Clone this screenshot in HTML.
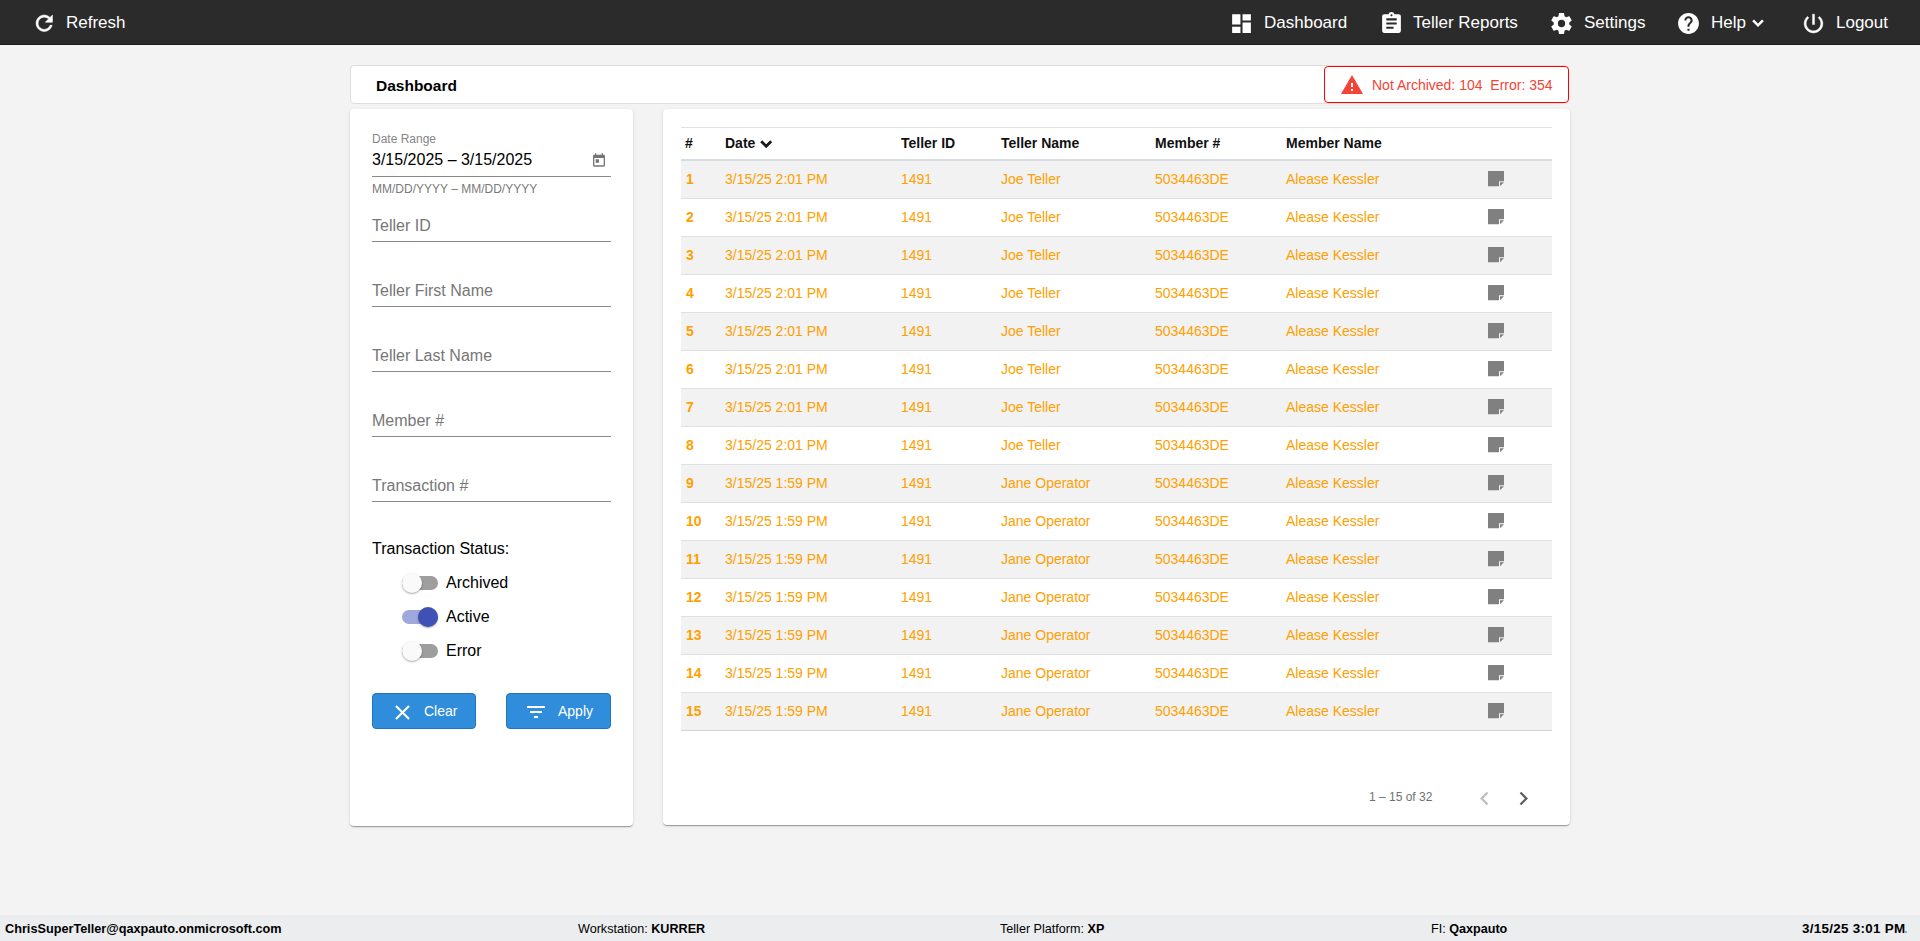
<!DOCTYPE html><html><head><meta charset="utf-8"><style>
*{margin:0;padding:0;box-sizing:border-box}
html,body{width:1920px;height:941px;overflow:hidden;background:#f3f3f3;font-family:"Liberation Sans",sans-serif}
.t{position:absolute;white-space:nowrap}
#hdr{position:absolute;left:0;top:0;width:1920px;height:45px;background:#2b2b2b;border-bottom:1px solid #1e1e1e}
.card{position:absolute;background:#fff;border-radius:4px;box-shadow:0 2px 1px -1px rgba(0,0,0,.2),0 1px 1px 0 rgba(0,0,0,.14),0 1px 3px 0 rgba(0,0,0,.12)}
.ul{position:absolute;left:372px;width:239px;height:1px;background:#8a8a8a}
.track{position:absolute;left:402px;width:36px;height:14px;border-radius:7px}
.knob{position:absolute;width:20px;height:20px;border-radius:50%;box-shadow:0 1px 2px rgba(0,0,0,.35)}
.btn{position:absolute;height:36px;background:#308ddb;border:1px solid #2274bd;border-radius:4px}
#ftr{position:absolute;left:0;top:915px;width:1920px;height:26px;background:#ecedef}
</style></head><body><div id="hdr"></div>
<svg style="position:absolute;left:31.7px;top:10.7px;width:24.5px;height:24.5px;" viewBox="0 0 24 24" fill="#fff" stroke="#fff" stroke-width="0.55"><path d="M17.65 6.35C16.2 4.9 14.21 4 12 4c-4.42 0-7.99 3.58-7.99 8s3.57 8 7.99 8c3.73 0 6.84-2.55 7.730-6h-2.08c-.82 2.33-3.04 4-5.65 4-3.31 0-6-2.69-6-6s2.69-6 6-6c1.66 0 3.14.69 4.22 1.78L13 11h7V4l-2.35 2.35z"/></svg>
<div class="t" style="left:66px;top:13px;font-size:17px;line-height:20px;color:#fff;font-weight:normal;">Refresh</div>
<svg style="position:absolute;left:1229px;top:11px;width:25px;height:25px;" viewBox="0 0 24 24" fill="#fff"><path d="M3 13h8V3H3v10zm0 8h8v-6H3v6zm10 0h8V11h-8v10zm0-18v6h8V3h-8z"/></svg>
<div class="t" style="left:1264px;top:13px;font-size:17px;line-height:20px;color:#fff;font-weight:normal;">Dashboard</div>
<svg style="position:absolute;left:1379px;top:11px;width:25px;height:25px;" viewBox="0 0 24 24" fill="#fff"><path d="M19 3h-4.18C14.4 1.84 13.3 1 12 1c-1.3 0-2.4.84-2.82 2H5c-1.1 0-2 .9-2 2v14c0 1.1.9 2 2 2h14c1.1 0 2-.9 2-2V5c0-1.1-.9-2-2-2zm-7 0c.55 0 1 .45 1 1s-.45 1-1 1-1-.45-1-1 .45-1 1-1zm2 14H7v-2h7v2zm3-4H7v-2h10v2zm0-4H7V7h10v2z"/></svg>
<div class="t" style="left:1413px;top:13px;font-size:17px;line-height:20px;color:#fff;font-weight:normal;">Teller Reports</div>
<svg style="position:absolute;left:1549px;top:11px;width:25px;height:25px;" viewBox="0 0 24 24" fill="#fff"><path d="M12,15.5A3.5,3.5 0 0,1 8.5,12A3.5,3.5 0 0,1 12,8.5A3.5,3.5 0 0,1 15.5,12A3.5,3.5 0 0,1 12,15.5M19.43,12.97C19.47,12.65 19.5,12.33 19.5,12C19.5,11.67 19.47,11.34 19.43,11L21.54,9.37C21.73,9.22 21.78,8.95 21.66,8.73L19.66,5.27C19.54,5.05 19.27,4.96 19.05,5.05L16.56,6.05C16.04,5.66 15.5,5.32 14.87,5.07L14.5,2.42C14.46,2.18 14.25,2 14,2H10C9.75,2 9.54,2.18 9.5,2.42L9.13,5.07C8.5,5.32 7.96,5.66 7.44,6.05L4.95,5.05C4.73,4.96 4.46,5.05 4.34,5.27L2.34,8.73C2.21,8.95 2.27,9.22 2.46,9.37L4.57,11C4.53,11.34 4.5,11.67 4.5,12C4.5,12.33 4.53,12.65 4.57,12.97L2.46,14.63C2.27,14.78 2.21,15.05 2.34,15.27L4.34,18.73C4.46,18.95 4.73,19.03 4.95,18.95L7.44,17.94C7.96,18.34 8.5,18.68 9.13,18.93L9.5,21.58C9.54,21.82 9.75,22 10,22H14C14.25,22 14.46,21.82 14.5,21.58L14.87,18.93C15.5,18.67 16.04,18.34 16.56,17.94L19.05,18.95C19.27,19.03 19.54,18.95 19.66,18.73L21.66,15.27C21.78,15.05 21.73,14.78 21.54,14.63L19.43,12.97Z"/></svg>
<div class="t" style="left:1584px;top:13px;font-size:17px;line-height:20px;color:#fff;font-weight:normal;">Settings</div>
<svg style="position:absolute;left:1676px;top:11px;width:25px;height:25px;" viewBox="0 0 24 24" fill="#fff"><path d="M12 2C6.48 2 2 6.48 2 12s4.48 10 10 10 10-4.48 10-10S17.52 2 12 2zm1 17h-2v-2h2v2zm2.07-7.75l-.9.92C13.45 12.9 13 13.5 13 15h-2v-.5c0-1.1.45-2.1 1.17-2.830l1.24-1.26c.37-.36.59-.86.59-1.41 0-1.1-.9-2-2-2s-2 .9-2 2H8c0-2.21 1.790-4 4-4s4 1.79 4 4c0 .88-.36 1.68-.93 2.25z"/></svg>
<div class="t" style="left:1711px;top:13px;font-size:17px;line-height:20px;color:#fff;font-weight:normal;">Help</div>
<svg style="position:absolute;left:1801px;top:11px;width:25px;height:25px;" viewBox="0 0 24 24" fill="#fff" stroke="#fff" stroke-width="0.4"><path d="M13 3h-2v10h2V3zm4.83 2.17l-1.42 1.42C17.99 7.86 19 9.810 19 12c0 3.87-3.13 7-7 7s-7-3.13-7-7c0-2.19 1.01-4.14 2.58-5.42L6.17 5.17C4.23 6.82 3 9.26 3 12c0 4.97 4.03 9 9 9s9-4.03 9-9c0-2.74-1.23-5.18-3.17-6.83z"/></svg>
<div class="t" style="left:1836px;top:13px;font-size:17px;line-height:20px;color:#fff;font-weight:normal;">Logout</div>
<svg style="position:absolute;left:1745px;top:10px;width:25px;height:25px" viewBox="1745 10 25 25"><polyline points="1753.1,20.4 1758,25.3 1762.9,20.4" fill="none" stroke="#fff" stroke-width="2.5"/></svg>
<div style="position:absolute;background:#fff;border-radius:4px;border:1px solid #dedede;left:350px;top:65px;width:1219px;height:39px;"></div>
<div class="t" style="left:376px;top:77px;font-size:15.5px;line-height:18px;color:#000;font-weight:bold;">Dashboard</div>
<div style="position:absolute;left:1324px;top:66px;width:245px;height:37px;border:1px solid #ff0000;border-radius:4px;background:#fff;"></div>
<svg style="position:absolute;left:1340px;top:73px;width:24px;height:24px;" viewBox="0 0 24 24" fill="#f44336"><path d="M1 21h22L12 2 1 21zm12-3h-2v-2h2v2zm0-4h-2v-4h2v4z"/></svg>
<div class="t" style="left:1372px;top:77px;font-size:14px;line-height:16px;color:#f44336;font-weight:normal;">Not Archived: 104&nbsp;&nbsp;Error: 354</div>
<div class="card" style="left:350px;top:109px;width:283px;height:717px;"></div>
<div class="t" style="left:372px;top:132px;font-size:12px;line-height:14px;color:#858585;font-weight:normal;">Date Range</div>
<div class="t" style="left:372px;top:151px;font-size:16px;line-height:18px;color:#000;font-weight:normal;">3/15/2025 – 3/15/2025</div>
<svg style="position:absolute;left:591px;top:152px;width:16px;height:16px;" viewBox="0 0 24 24" fill="#757575"><path d="M19 4h-1V2h-2v2H8V2H6v2H5c-1.11 0-1.99.9-1.99 2L3 20c0 1.1.89 2 2 2h14c1.1 0 2-.9 2-2V6c0-1.1-.9-2-2-2zm0 16H5V9h14v11zM7 11h5v5H7z"/></svg>
<div class="ul" style="top:176px"></div>
<div class="t" style="left:372px;top:182px;font-size:12px;line-height:14px;color:#7a7a7a;font-weight:normal;">MM/DD/YYYY – MM/DD/YYYY</div>
<div class="t" style="left:372px;top:217px;font-size:16px;line-height:18px;color:#777;font-weight:normal;">Teller ID</div>
<div class="ul" style="top:241px"></div>
<div class="t" style="left:372px;top:282px;font-size:16px;line-height:18px;color:#777;font-weight:normal;">Teller First Name</div>
<div class="ul" style="top:306px"></div>
<div class="t" style="left:372px;top:347px;font-size:16px;line-height:18px;color:#777;font-weight:normal;">Teller Last Name</div>
<div class="ul" style="top:371px"></div>
<div class="t" style="left:372px;top:412px;font-size:16px;line-height:18px;color:#777;font-weight:normal;">Member #</div>
<div class="ul" style="top:436px"></div>
<div class="t" style="left:372px;top:477px;font-size:16px;line-height:18px;color:#777;font-weight:normal;">Transaction #</div>
<div class="ul" style="top:501px"></div>
<div class="t" style="left:372px;top:540px;font-size:16px;line-height:18px;color:#000;font-weight:normal;">Transaction Status:</div>
<div class="track" style="top:576px;background:#9e9e9e"></div>
<div class="knob" style="left:402px;top:573px;background:#fafafa"></div>
<div class="t" style="left:446px;top:574px;font-size:16px;line-height:18px;color:#000;font-weight:normal;">Archived</div>
<div class="track" style="top:610px;background:#9fa8da"></div>
<div class="knob" style="left:418px;top:607px;background:#3f51b5"></div>
<div class="t" style="left:446px;top:608px;font-size:16px;line-height:18px;color:#000;font-weight:normal;">Active</div>
<div class="track" style="top:644px;background:#9e9e9e"></div>
<div class="knob" style="left:402px;top:641px;background:#fafafa"></div>
<div class="t" style="left:446px;top:642px;font-size:16px;line-height:18px;color:#000;font-weight:normal;">Error</div>
<div class="btn" style="left:372px;top:693px;width:104px;"></div>
<svg style="position:absolute;left:390px;top:700px;width:25px;height:25px;" viewBox="0 0 24 24" fill="#fff"><path d="M19 6.41L17.59 5 12 10.59 6.41 5 5 6.41 10.59 12 5 17.59 6.41 19 12 13.41 17.59 19 19 17.59 13.41 12z"/></svg>
<div class="t" style="left:424px;top:703px;font-size:14px;line-height:16px;color:#fff;font-weight:normal;">Clear</div>
<div class="btn" style="left:506px;top:693px;width:105px;"></div>
<svg style="position:absolute;left:524px;top:700px;width:24px;height:24px;" viewBox="0 0 24 24" fill="#fff"><path d="M10 18h4v-2h-4v2zM3 6v2h18V6H3zm3 7h12v-2H6v2z"/></svg>
<div class="t" style="left:558px;top:703px;font-size:14px;line-height:16px;color:#fff;font-weight:normal;">Apply</div>
<div class="card" style="left:663px;top:109px;width:907px;height:716px;"></div>
<div style="position:absolute;left:681px;top:127px;width:871px;height:1px;background:#dfe3e8"></div>
<div class="t" style="left:685px;top:135px;font-size:14px;line-height:16px;color:#111;font-weight:bold;">#</div>
<div class="t" style="left:725px;top:135px;font-size:14px;line-height:16px;color:#111;font-weight:bold;">Date</div>
<div class="t" style="left:901px;top:135px;font-size:14px;line-height:16px;color:#111;font-weight:bold;">Teller ID</div>
<div class="t" style="left:1001px;top:135px;font-size:14px;line-height:16px;color:#111;font-weight:bold;">Teller Name</div>
<div class="t" style="left:1155px;top:135px;font-size:14px;line-height:16px;color:#111;font-weight:bold;">Member #</div>
<div class="t" style="left:1286px;top:135px;font-size:14px;line-height:16px;color:#111;font-weight:bold;">Member Name</div>
<svg style="position:absolute;left:755px;top:134px;width:20px;height:20px" viewBox="755 134 20 20"><polyline points="761.2,141.2 766.2,146.2 771.2,141.2" fill="none" stroke="#1a1a1a" stroke-width="2.8"/></svg>
<div style="position:absolute;left:681px;top:159px;width:871px;height:2px;background:#d8dde3"></div>
<div style="position:absolute;left:681px;top:161px;width:871px;height:38px;background:#f2f2f2;border-bottom:1px solid #dde1e5"></div>
<div class="t" style="left:686px;top:171px;font-size:14px;line-height:16px;color:#ffa000;font-weight:bold;">1</div>
<div class="t" style="left:725px;top:171px;font-size:14px;line-height:16px;color:#ffa000;font-weight:normal;">3/15/25 2:01 PM</div>
<div class="t" style="left:901px;top:171px;font-size:14px;line-height:16px;color:#ffa000;font-weight:normal;">1491</div>
<div class="t" style="left:1001px;top:171px;font-size:14px;line-height:16px;color:#ffa000;font-weight:normal;">Joe Teller</div>
<div class="t" style="left:1155px;top:171px;font-size:14px;line-height:16px;color:#ffa000;font-weight:normal;">5034463DE</div>
<div class="t" style="left:1286px;top:171px;font-size:14px;line-height:16px;color:#ffa000;font-weight:normal;">Alease Kessler</div>
<svg style="position:absolute;left:1488px;top:171px;width:16px;height:16px" viewBox="0 0 16 16" fill="#808080"><path d="M0 0H16V10.3H11V15.3H0Z M12 11.3H16L12 15.3Z"/></svg>
<div style="position:absolute;left:681px;top:199px;width:871px;height:38px;background:#fff;border-bottom:1px solid #dde1e5"></div>
<div class="t" style="left:686px;top:209px;font-size:14px;line-height:16px;color:#ffa000;font-weight:bold;">2</div>
<div class="t" style="left:725px;top:209px;font-size:14px;line-height:16px;color:#ffa000;font-weight:normal;">3/15/25 2:01 PM</div>
<div class="t" style="left:901px;top:209px;font-size:14px;line-height:16px;color:#ffa000;font-weight:normal;">1491</div>
<div class="t" style="left:1001px;top:209px;font-size:14px;line-height:16px;color:#ffa000;font-weight:normal;">Joe Teller</div>
<div class="t" style="left:1155px;top:209px;font-size:14px;line-height:16px;color:#ffa000;font-weight:normal;">5034463DE</div>
<div class="t" style="left:1286px;top:209px;font-size:14px;line-height:16px;color:#ffa000;font-weight:normal;">Alease Kessler</div>
<svg style="position:absolute;left:1488px;top:209px;width:16px;height:16px" viewBox="0 0 16 16" fill="#808080"><path d="M0 0H16V10.3H11V15.3H0Z M12 11.3H16L12 15.3Z"/></svg>
<div style="position:absolute;left:681px;top:237px;width:871px;height:38px;background:#f2f2f2;border-bottom:1px solid #dde1e5"></div>
<div class="t" style="left:686px;top:247px;font-size:14px;line-height:16px;color:#ffa000;font-weight:bold;">3</div>
<div class="t" style="left:725px;top:247px;font-size:14px;line-height:16px;color:#ffa000;font-weight:normal;">3/15/25 2:01 PM</div>
<div class="t" style="left:901px;top:247px;font-size:14px;line-height:16px;color:#ffa000;font-weight:normal;">1491</div>
<div class="t" style="left:1001px;top:247px;font-size:14px;line-height:16px;color:#ffa000;font-weight:normal;">Joe Teller</div>
<div class="t" style="left:1155px;top:247px;font-size:14px;line-height:16px;color:#ffa000;font-weight:normal;">5034463DE</div>
<div class="t" style="left:1286px;top:247px;font-size:14px;line-height:16px;color:#ffa000;font-weight:normal;">Alease Kessler</div>
<svg style="position:absolute;left:1488px;top:247px;width:16px;height:16px" viewBox="0 0 16 16" fill="#808080"><path d="M0 0H16V10.3H11V15.3H0Z M12 11.3H16L12 15.3Z"/></svg>
<div style="position:absolute;left:681px;top:275px;width:871px;height:38px;background:#fff;border-bottom:1px solid #dde1e5"></div>
<div class="t" style="left:686px;top:285px;font-size:14px;line-height:16px;color:#ffa000;font-weight:bold;">4</div>
<div class="t" style="left:725px;top:285px;font-size:14px;line-height:16px;color:#ffa000;font-weight:normal;">3/15/25 2:01 PM</div>
<div class="t" style="left:901px;top:285px;font-size:14px;line-height:16px;color:#ffa000;font-weight:normal;">1491</div>
<div class="t" style="left:1001px;top:285px;font-size:14px;line-height:16px;color:#ffa000;font-weight:normal;">Joe Teller</div>
<div class="t" style="left:1155px;top:285px;font-size:14px;line-height:16px;color:#ffa000;font-weight:normal;">5034463DE</div>
<div class="t" style="left:1286px;top:285px;font-size:14px;line-height:16px;color:#ffa000;font-weight:normal;">Alease Kessler</div>
<svg style="position:absolute;left:1488px;top:285px;width:16px;height:16px" viewBox="0 0 16 16" fill="#808080"><path d="M0 0H16V10.3H11V15.3H0Z M12 11.3H16L12 15.3Z"/></svg>
<div style="position:absolute;left:681px;top:313px;width:871px;height:38px;background:#f2f2f2;border-bottom:1px solid #dde1e5"></div>
<div class="t" style="left:686px;top:323px;font-size:14px;line-height:16px;color:#ffa000;font-weight:bold;">5</div>
<div class="t" style="left:725px;top:323px;font-size:14px;line-height:16px;color:#ffa000;font-weight:normal;">3/15/25 2:01 PM</div>
<div class="t" style="left:901px;top:323px;font-size:14px;line-height:16px;color:#ffa000;font-weight:normal;">1491</div>
<div class="t" style="left:1001px;top:323px;font-size:14px;line-height:16px;color:#ffa000;font-weight:normal;">Joe Teller</div>
<div class="t" style="left:1155px;top:323px;font-size:14px;line-height:16px;color:#ffa000;font-weight:normal;">5034463DE</div>
<div class="t" style="left:1286px;top:323px;font-size:14px;line-height:16px;color:#ffa000;font-weight:normal;">Alease Kessler</div>
<svg style="position:absolute;left:1488px;top:323px;width:16px;height:16px" viewBox="0 0 16 16" fill="#808080"><path d="M0 0H16V10.3H11V15.3H0Z M12 11.3H16L12 15.3Z"/></svg>
<div style="position:absolute;left:681px;top:351px;width:871px;height:38px;background:#fff;border-bottom:1px solid #dde1e5"></div>
<div class="t" style="left:686px;top:361px;font-size:14px;line-height:16px;color:#ffa000;font-weight:bold;">6</div>
<div class="t" style="left:725px;top:361px;font-size:14px;line-height:16px;color:#ffa000;font-weight:normal;">3/15/25 2:01 PM</div>
<div class="t" style="left:901px;top:361px;font-size:14px;line-height:16px;color:#ffa000;font-weight:normal;">1491</div>
<div class="t" style="left:1001px;top:361px;font-size:14px;line-height:16px;color:#ffa000;font-weight:normal;">Joe Teller</div>
<div class="t" style="left:1155px;top:361px;font-size:14px;line-height:16px;color:#ffa000;font-weight:normal;">5034463DE</div>
<div class="t" style="left:1286px;top:361px;font-size:14px;line-height:16px;color:#ffa000;font-weight:normal;">Alease Kessler</div>
<svg style="position:absolute;left:1488px;top:361px;width:16px;height:16px" viewBox="0 0 16 16" fill="#808080"><path d="M0 0H16V10.3H11V15.3H0Z M12 11.3H16L12 15.3Z"/></svg>
<div style="position:absolute;left:681px;top:389px;width:871px;height:38px;background:#f2f2f2;border-bottom:1px solid #dde1e5"></div>
<div class="t" style="left:686px;top:399px;font-size:14px;line-height:16px;color:#ffa000;font-weight:bold;">7</div>
<div class="t" style="left:725px;top:399px;font-size:14px;line-height:16px;color:#ffa000;font-weight:normal;">3/15/25 2:01 PM</div>
<div class="t" style="left:901px;top:399px;font-size:14px;line-height:16px;color:#ffa000;font-weight:normal;">1491</div>
<div class="t" style="left:1001px;top:399px;font-size:14px;line-height:16px;color:#ffa000;font-weight:normal;">Joe Teller</div>
<div class="t" style="left:1155px;top:399px;font-size:14px;line-height:16px;color:#ffa000;font-weight:normal;">5034463DE</div>
<div class="t" style="left:1286px;top:399px;font-size:14px;line-height:16px;color:#ffa000;font-weight:normal;">Alease Kessler</div>
<svg style="position:absolute;left:1488px;top:399px;width:16px;height:16px" viewBox="0 0 16 16" fill="#808080"><path d="M0 0H16V10.3H11V15.3H0Z M12 11.3H16L12 15.3Z"/></svg>
<div style="position:absolute;left:681px;top:427px;width:871px;height:38px;background:#fff;border-bottom:1px solid #dde1e5"></div>
<div class="t" style="left:686px;top:437px;font-size:14px;line-height:16px;color:#ffa000;font-weight:bold;">8</div>
<div class="t" style="left:725px;top:437px;font-size:14px;line-height:16px;color:#ffa000;font-weight:normal;">3/15/25 2:01 PM</div>
<div class="t" style="left:901px;top:437px;font-size:14px;line-height:16px;color:#ffa000;font-weight:normal;">1491</div>
<div class="t" style="left:1001px;top:437px;font-size:14px;line-height:16px;color:#ffa000;font-weight:normal;">Joe Teller</div>
<div class="t" style="left:1155px;top:437px;font-size:14px;line-height:16px;color:#ffa000;font-weight:normal;">5034463DE</div>
<div class="t" style="left:1286px;top:437px;font-size:14px;line-height:16px;color:#ffa000;font-weight:normal;">Alease Kessler</div>
<svg style="position:absolute;left:1488px;top:437px;width:16px;height:16px" viewBox="0 0 16 16" fill="#808080"><path d="M0 0H16V10.3H11V15.3H0Z M12 11.3H16L12 15.3Z"/></svg>
<div style="position:absolute;left:681px;top:465px;width:871px;height:38px;background:#f2f2f2;border-bottom:1px solid #dde1e5"></div>
<div class="t" style="left:686px;top:475px;font-size:14px;line-height:16px;color:#ffa000;font-weight:bold;">9</div>
<div class="t" style="left:725px;top:475px;font-size:14px;line-height:16px;color:#ffa000;font-weight:normal;">3/15/25 1:59 PM</div>
<div class="t" style="left:901px;top:475px;font-size:14px;line-height:16px;color:#ffa000;font-weight:normal;">1491</div>
<div class="t" style="left:1001px;top:475px;font-size:14px;line-height:16px;color:#ffa000;font-weight:normal;">Jane Operator</div>
<div class="t" style="left:1155px;top:475px;font-size:14px;line-height:16px;color:#ffa000;font-weight:normal;">5034463DE</div>
<div class="t" style="left:1286px;top:475px;font-size:14px;line-height:16px;color:#ffa000;font-weight:normal;">Alease Kessler</div>
<svg style="position:absolute;left:1488px;top:475px;width:16px;height:16px" viewBox="0 0 16 16" fill="#808080"><path d="M0 0H16V10.3H11V15.3H0Z M12 11.3H16L12 15.3Z"/></svg>
<div style="position:absolute;left:681px;top:503px;width:871px;height:38px;background:#fff;border-bottom:1px solid #dde1e5"></div>
<div class="t" style="left:686px;top:513px;font-size:14px;line-height:16px;color:#ffa000;font-weight:bold;">10</div>
<div class="t" style="left:725px;top:513px;font-size:14px;line-height:16px;color:#ffa000;font-weight:normal;">3/15/25 1:59 PM</div>
<div class="t" style="left:901px;top:513px;font-size:14px;line-height:16px;color:#ffa000;font-weight:normal;">1491</div>
<div class="t" style="left:1001px;top:513px;font-size:14px;line-height:16px;color:#ffa000;font-weight:normal;">Jane Operator</div>
<div class="t" style="left:1155px;top:513px;font-size:14px;line-height:16px;color:#ffa000;font-weight:normal;">5034463DE</div>
<div class="t" style="left:1286px;top:513px;font-size:14px;line-height:16px;color:#ffa000;font-weight:normal;">Alease Kessler</div>
<svg style="position:absolute;left:1488px;top:513px;width:16px;height:16px" viewBox="0 0 16 16" fill="#808080"><path d="M0 0H16V10.3H11V15.3H0Z M12 11.3H16L12 15.3Z"/></svg>
<div style="position:absolute;left:681px;top:541px;width:871px;height:38px;background:#f2f2f2;border-bottom:1px solid #dde1e5"></div>
<div class="t" style="left:686px;top:551px;font-size:14px;line-height:16px;color:#ffa000;font-weight:bold;">11</div>
<div class="t" style="left:725px;top:551px;font-size:14px;line-height:16px;color:#ffa000;font-weight:normal;">3/15/25 1:59 PM</div>
<div class="t" style="left:901px;top:551px;font-size:14px;line-height:16px;color:#ffa000;font-weight:normal;">1491</div>
<div class="t" style="left:1001px;top:551px;font-size:14px;line-height:16px;color:#ffa000;font-weight:normal;">Jane Operator</div>
<div class="t" style="left:1155px;top:551px;font-size:14px;line-height:16px;color:#ffa000;font-weight:normal;">5034463DE</div>
<div class="t" style="left:1286px;top:551px;font-size:14px;line-height:16px;color:#ffa000;font-weight:normal;">Alease Kessler</div>
<svg style="position:absolute;left:1488px;top:551px;width:16px;height:16px" viewBox="0 0 16 16" fill="#808080"><path d="M0 0H16V10.3H11V15.3H0Z M12 11.3H16L12 15.3Z"/></svg>
<div style="position:absolute;left:681px;top:579px;width:871px;height:38px;background:#fff;border-bottom:1px solid #dde1e5"></div>
<div class="t" style="left:686px;top:589px;font-size:14px;line-height:16px;color:#ffa000;font-weight:bold;">12</div>
<div class="t" style="left:725px;top:589px;font-size:14px;line-height:16px;color:#ffa000;font-weight:normal;">3/15/25 1:59 PM</div>
<div class="t" style="left:901px;top:589px;font-size:14px;line-height:16px;color:#ffa000;font-weight:normal;">1491</div>
<div class="t" style="left:1001px;top:589px;font-size:14px;line-height:16px;color:#ffa000;font-weight:normal;">Jane Operator</div>
<div class="t" style="left:1155px;top:589px;font-size:14px;line-height:16px;color:#ffa000;font-weight:normal;">5034463DE</div>
<div class="t" style="left:1286px;top:589px;font-size:14px;line-height:16px;color:#ffa000;font-weight:normal;">Alease Kessler</div>
<svg style="position:absolute;left:1488px;top:589px;width:16px;height:16px" viewBox="0 0 16 16" fill="#808080"><path d="M0 0H16V10.3H11V15.3H0Z M12 11.3H16L12 15.3Z"/></svg>
<div style="position:absolute;left:681px;top:617px;width:871px;height:38px;background:#f2f2f2;border-bottom:1px solid #dde1e5"></div>
<div class="t" style="left:686px;top:627px;font-size:14px;line-height:16px;color:#ffa000;font-weight:bold;">13</div>
<div class="t" style="left:725px;top:627px;font-size:14px;line-height:16px;color:#ffa000;font-weight:normal;">3/15/25 1:59 PM</div>
<div class="t" style="left:901px;top:627px;font-size:14px;line-height:16px;color:#ffa000;font-weight:normal;">1491</div>
<div class="t" style="left:1001px;top:627px;font-size:14px;line-height:16px;color:#ffa000;font-weight:normal;">Jane Operator</div>
<div class="t" style="left:1155px;top:627px;font-size:14px;line-height:16px;color:#ffa000;font-weight:normal;">5034463DE</div>
<div class="t" style="left:1286px;top:627px;font-size:14px;line-height:16px;color:#ffa000;font-weight:normal;">Alease Kessler</div>
<svg style="position:absolute;left:1488px;top:627px;width:16px;height:16px" viewBox="0 0 16 16" fill="#808080"><path d="M0 0H16V10.3H11V15.3H0Z M12 11.3H16L12 15.3Z"/></svg>
<div style="position:absolute;left:681px;top:655px;width:871px;height:38px;background:#fff;border-bottom:1px solid #dde1e5"></div>
<div class="t" style="left:686px;top:665px;font-size:14px;line-height:16px;color:#ffa000;font-weight:bold;">14</div>
<div class="t" style="left:725px;top:665px;font-size:14px;line-height:16px;color:#ffa000;font-weight:normal;">3/15/25 1:59 PM</div>
<div class="t" style="left:901px;top:665px;font-size:14px;line-height:16px;color:#ffa000;font-weight:normal;">1491</div>
<div class="t" style="left:1001px;top:665px;font-size:14px;line-height:16px;color:#ffa000;font-weight:normal;">Jane Operator</div>
<div class="t" style="left:1155px;top:665px;font-size:14px;line-height:16px;color:#ffa000;font-weight:normal;">5034463DE</div>
<div class="t" style="left:1286px;top:665px;font-size:14px;line-height:16px;color:#ffa000;font-weight:normal;">Alease Kessler</div>
<svg style="position:absolute;left:1488px;top:665px;width:16px;height:16px" viewBox="0 0 16 16" fill="#808080"><path d="M0 0H16V10.3H11V15.3H0Z M12 11.3H16L12 15.3Z"/></svg>
<div style="position:absolute;left:681px;top:693px;width:871px;height:38px;background:#f2f2f2;border-bottom:1px solid #d2d4d6"></div>
<div class="t" style="left:686px;top:703px;font-size:14px;line-height:16px;color:#ffa000;font-weight:bold;">15</div>
<div class="t" style="left:725px;top:703px;font-size:14px;line-height:16px;color:#ffa000;font-weight:normal;">3/15/25 1:59 PM</div>
<div class="t" style="left:901px;top:703px;font-size:14px;line-height:16px;color:#ffa000;font-weight:normal;">1491</div>
<div class="t" style="left:1001px;top:703px;font-size:14px;line-height:16px;color:#ffa000;font-weight:normal;">Jane Operator</div>
<div class="t" style="left:1155px;top:703px;font-size:14px;line-height:16px;color:#ffa000;font-weight:normal;">5034463DE</div>
<div class="t" style="left:1286px;top:703px;font-size:14px;line-height:16px;color:#ffa000;font-weight:normal;">Alease Kessler</div>
<svg style="position:absolute;left:1488px;top:703px;width:16px;height:16px" viewBox="0 0 16 16" fill="#808080"><path d="M0 0H16V10.3H11V15.3H0Z M12 11.3H16L12 15.3Z"/></svg>
<div class="t" style="left:1369px;top:790px;font-size:12px;line-height:14px;color:#707070;font-weight:normal;">1 – 15 of 32</div>
<svg style="position:absolute;left:1470.8px;top:784.8px;width:27px;height:27px;" viewBox="0 0 24 24" fill="#bdbdbd"><path d="M15.41 7.41L14 6l-6 6 6 6 1.41-1.41L10.83 12z"/></svg>
<svg style="position:absolute;left:1510.2px;top:784.8px;width:27px;height:27px;" viewBox="0 0 24 24" fill="#5f5f5f"><path d="M10 6L8.59 7.41 13.17 12l-4.58 4.59L10 18l6-6z"/></svg>
<div id="ftr"></div>
<div class="t" style="left:5px;top:921px;font-size:12.7px;line-height:16px;color:#000;font-weight:normal;"><b>ChrisSuperTeller@qaxpauto.onmicrosoft.com</b></div>
<div class="t" style="left:578px;top:921px;font-size:12.6px;line-height:16px;color:#000;font-weight:normal;">Workstation: <b>KURRER</b></div>
<div class="t" style="left:1000px;top:921px;font-size:12.6px;line-height:16px;color:#000;font-weight:normal;">Teller Platform: <b>XP</b></div>
<div class="t" style="left:1431px;top:921px;font-size:12.6px;line-height:16px;color:#000;font-weight:normal;">FI: <b>Qaxpauto</b></div>
<div class="t" style="left:1802px;top:921px;font-size:13.4px;line-height:16px;color:#000;font-weight:normal;letter-spacing:.3px"><b>3/15/25 3:01 PM</b></div>
<div style="position:absolute;left:1905px;top:931px;width:2px;height:2px;background:#9aa8b8"></div></body></html>
